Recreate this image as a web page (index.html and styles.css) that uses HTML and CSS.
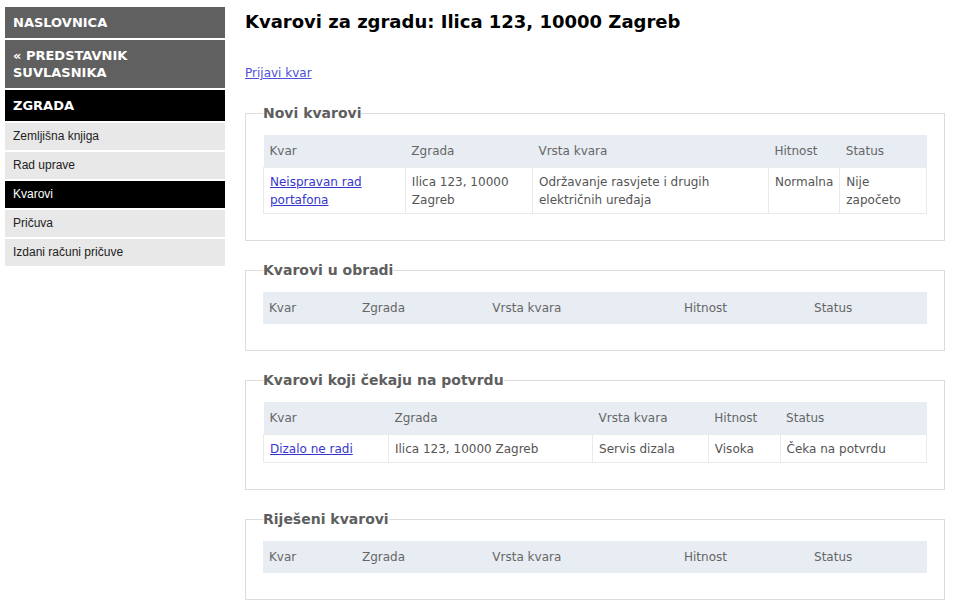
FILE: index.html
```html
<!DOCTYPE html>
<html lang="hr">
<head>
<meta charset="utf-8">
<title>Kvarovi</title>
<link rel="stylesheet" href="styles.css">
</head>
<body>
<div class="page">
  <nav class="sidebar">
    <a class="nav-head" href="#">NASLOVNICA</a>
    <a class="nav-head" href="#">« PREDSTAVNIK SUVLASNIKA</a>
    <a class="nav-head nav-head--current" href="#">ZGRADA</a>
    <a class="nav-item" href="#">Zemljišna knjiga</a>
    <a class="nav-item" href="#">Rad uprave</a>
    <a class="nav-item nav-item--active" href="#">Kvarovi</a>
    <a class="nav-item" href="#">Pričuva</a>
    <a class="nav-item" href="#">Izdani računi pričuve</a>
  </nav>
  <main class="content">
    <h1 class="title">Kvarovi za zgradu: Ilica 123, 10000 Zagreb</h1>
    <p class="report"><a class="report-link" href="#">Prijavi kvar</a></p>

    <fieldset class="group">
      <legend class="group-title">Novi kvarovi</legend>
      <table class="faults">
        <thead>
          <tr><th>Kvar</th><th>Zgrada</th><th>Vrsta kvara</th><th>Hitnost</th><th>Status</th></tr>
        </thead>
        <tbody>
          <tr>
            <td><a class="fault-link" href="#">Neispravan rad portafona</a></td>
            <td>Ilica 123, 10000 Zagreb</td>
            <td>Održavanje rasvjete i drugih električnih uređaja</td>
            <td>Normalna</td>
            <td>Nije započeto</td>
          </tr>
        </tbody>
      </table>
    </fieldset>

    <fieldset class="group">
      <legend class="group-title">Kvarovi u obradi</legend>
      <table class="faults">
        <thead>
          <tr><th>Kvar</th><th>Zgrada</th><th>Vrsta kvara</th><th>Hitnost</th><th>Status</th></tr>
        </thead>
      </table>
    </fieldset>

    <fieldset class="group">
      <legend class="group-title">Kvarovi koji čekaju na potvrdu</legend>
      <table class="faults">
        <thead>
          <tr><th>Kvar</th><th>Zgrada</th><th>Vrsta kvara</th><th>Hitnost</th><th>Status</th></tr>
        </thead>
        <tbody>
          <tr>
            <td><a class="fault-link" href="#">Dizalo ne radi</a></td>
            <td>Ilica 123, 10000 Zagreb</td>
            <td>Servis dizala</td>
            <td>Visoka</td>
            <td>Čeka na potvrdu</td>
          </tr>
        </tbody>
      </table>
    </fieldset>

    <fieldset class="group">
      <legend class="group-title">Riješeni kvarovi</legend>
      <table class="faults">
        <thead>
          <tr><th>Kvar</th><th>Zgrada</th><th>Vrsta kvara</th><th>Hitnost</th><th>Status</th></tr>
        </thead>
      </table>
    </fieldset>
  </main>
</div>
</body>
</html>
```
FILE: styles.css
```css
html, body {
  margin: 0;
  padding: 0;
  background: #fff;
}

body {
  font-family: "DejaVu Sans", Verdana, sans-serif;
  color: #555;
}

.page {
  display: flex;
  gap: 20px;
  padding: 7px 8px 0 5px;
  align-items: flex-start;
}

.sidebar {
  flex: none;
  width: 220px;
  display: flex;
  flex-direction: column;
  gap: 2px;
}

.nav-head {
  display: block;
  background: #606060;
  color: #fff;
  font-family: "DejaVu Sans", Verdana, sans-serif;
  font-weight: bold;
  font-size: 13px;
  line-height: 17px;
  padding: 7px 8px;
  text-decoration: none;
}

.nav-head--current {
  background: #000;
}

.nav-item {
  display: block;
  background: #e8e8e8;
  color: #222;
  font-family: "Liberation Sans", Arial, sans-serif;
  font-size: 12px;
  line-height: 15px;
  padding: 6px 8px;
  text-decoration: none;
}

.nav-item--active {
  background: #000;
  color: #fff;
}

.content {
  flex: none;
  width: 700px;
}

.title {
  margin: 4px 0 32px;
  font-size: 18px;
  line-height: 22px;
  font-weight: bold;
  color: #000;
}

.report {
  margin: 0 0 24px;
  font-size: 12px;
  line-height: 16px;
}

.report-link {
  color: #5050d8;
}

.group {
  margin: 0 0 21px;
  padding: 13px 17px 26px;
  border: 1px solid #dcdcdc;
  min-width: 0;
}

.group-title {
  padding: 0;
  font-size: 14px;
  line-height: 17px;
  font-weight: bold;
  color: #5e5e5e;
}

.faults {
  width: 100%;
  border-collapse: collapse;
  font-size: 12px;
  line-height: 16px;
}

.faults th,
.faults td {
  text-align: left;
  vertical-align: top;
  font-weight: normal;
}

.faults th {
  padding: 8px 6px;
  background: #e8edf3;
  color: #666;
  border: 0;
}

.faults td {
  padding: 5px 6px 4px;
  line-height: 18px;
  background: #fff;
  color: #555;
  border: 1px solid #eaeaea;
}

.fault-link {
  color: #3636cc;
}
```
